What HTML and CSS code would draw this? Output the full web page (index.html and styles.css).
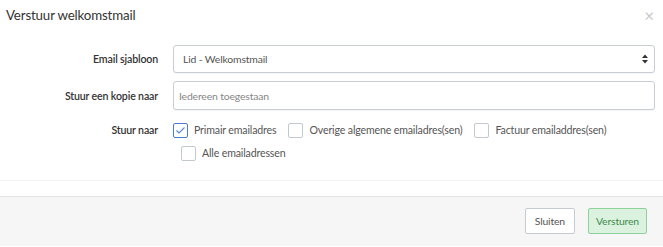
FILE: index.html
```html
<!DOCTYPE html>
<html>
<head>
    <title>Verstuur welkomstmail</title>
    <link rel="stylesheet" href="styles.css">
</head>
<body>

    <!-- Kop -->
    <div class="modal-header">
        <h4 class="modal-title">Verstuur welkomstmail</h4>
        <span class="close">&times;</span>
    </div>

    <!-- Formulier -->
    <div class="modal-body">
        <div class="form-row">
            <label class="form-label">Email sjabloon</label>
            <div class="select-wrap">
                <select class="form-control">
                    <option>Lid - Welkomstmail</option>
                </select>
                <svg class="select-arrows" width="6" height="10" viewBox="0 0 6 10">
                    <path d="M0 4 L3 0.5 L6 4 Z M0 6 L3 9.5 L6 6 Z" fill="#333"/>
                </svg>
            </div>
        </div>

        <div class="form-row">
            <label class="form-label">Stuur een kopie naar</label>
            <input type="text" class="form-control" placeholder="Iedereen toegestaan">
        </div>

        <div class="form-row checks">
            <label class="form-label">Stuur naar</label>
            <div class="check-list">
                <div class="check-line">
                    <label class="check"><span class="box checked"><svg width="11" height="9" viewBox="0 0 11 9"><path d="M1.5 4.5 L4 7 L9.5 1.5" fill="none" stroke="#5b8ad6" stroke-width="1.2"/></svg></span>Primair emailadres</label>
                    <label class="check"><span class="box"></span>Overige algemene emailadres(sen)</label>
                    <label class="check"><span class="box"></span>Factuur emailaddres(sen)</label>
                </div>
                <div class="check-line indent">
                    <label class="check"><span class="box"></span>Alle emailadressen</label>
                </div>
            </div>
        </div>
    </div>

    <!-- Knoppen -->
    <div class="modal-footer">
        <button type="button" class="btn btn-default">Sluiten</button>
        <button type="button" class="btn btn-success">Versturen</button>
    </div>

</body>
</html>
```

FILE: styles.css
```css
/* Basis */
body {
    margin: 0;
    font-family: "Lato", "Liberation Sans", sans-serif;
    color: #333;
    background-color: #fff;
    letter-spacing: -0.15px;
}

/* Kop van het venster */
.modal-header {
    display: flex;
    align-items: center;
    justify-content: space-between;
    height: 30px;
    padding: 0 9px 0 6px;
}

.modal-title {
    margin: 0;
    font-size: 13.3px;
    font-weight: normal;
    color: #333;
}

.close {
    font-size: 17px;
    color: #c8c8c8;
    line-height: 1;
}

/* Formulier */
.modal-body {
    padding: 15px 8px 0 0;
    height: 151px;
    box-sizing: border-box;
    border-bottom: 1px solid #f2f2f2;
}

.form-row {
    display: grid;
    grid-template-columns: 173px 1fr;
    align-items: center;
    margin-bottom: 8px;
}

.form-label {
    text-align: right;
    padding-right: 15px;
    font-size: 10.6px;
    font-weight: 600;
    color: #333;
}

.form-control {
    width: 100%;
    box-sizing: border-box;
    height: 29px;
    border: 1px solid #c9cdd4;
    border-radius: 3px;
    font-family: inherit;
    font-size: 10.4px;
    letter-spacing: -0.15px;
    color: #555;
    background-color: #fff;
    box-shadow: 0 1px 1px rgba(0, 0, 0, 0.04);
}

input.form-control {
    padding: 0 5px;
}

input.form-control::placeholder {
    color: #868686;
}

.select-wrap {
    position: relative;
}

select.form-control {
    appearance: none;
    -webkit-appearance: none;
    padding: 0 9px;
    height: 28px;
}

.select-arrows {
    position: absolute;
    right: 7px;
    top: 9px;
}

/* Vinkjes */
.form-row.checks {
    align-items: start;
    margin-top: 12px;
}

.form-row.checks .form-label {
    line-height: 16px;
}

.check-line {
    display: flex;
    gap: 12px;
    margin-bottom: 7px;
}

.check-line.indent {
    padding-left: 8px;
}

.check {
    display: flex;
    align-items: center;
    gap: 6px;
    font-size: 10.6px;
    color: #555;
    line-height: 16px;
}

.box {
    display: inline-flex;
    align-items: center;
    justify-content: center;
    width: 15px;
    height: 15px;
    box-sizing: border-box;
    border: 1px solid #c4c8cf;
    border-radius: 2px;
    background-color: #fff;
}

.box.checked {
    border-color: #4d7cd1;
}

/* Voettekst */
.modal-footer {
    margin-top: 15px;
    height: 50px;
    box-sizing: border-box;
    border-top: 1px solid #e3e3e3;
    background-color: #f6f6f6;
    display: flex;
    justify-content: flex-end;
    align-items: center;
    gap: 13px;
    padding: 0 16px 2px 0;
}

.btn {
    height: 26px;
    padding: 0 8px;
    border-radius: 2px;
    font-family: inherit;
    font-size: 10.4px;
    letter-spacing: -0.15px;
    cursor: pointer;
}

.btn-default {
    background-color: #fff;
    border: 1px solid #c5cad3;
    color: #555;
    padding: 0 9px;
}

.btn-success {
    background-color: #dbf2df;
    border: 1px solid #8ed19d;
    color: #3d8b4c;
    padding: 0 7px;
}
```
